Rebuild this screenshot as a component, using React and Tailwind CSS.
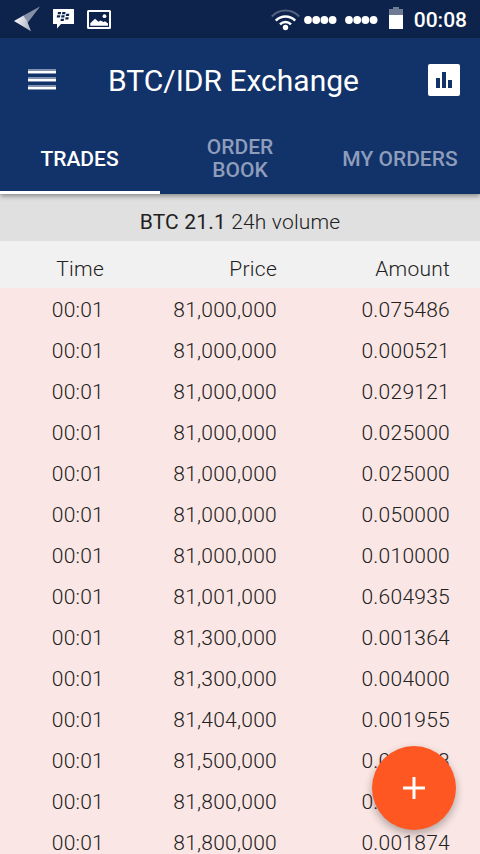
import React from "react";

const TABS = ["TRADES", "ORDER BOOK", "MY ORDERS"];

const TRADES = [
  { time: "00:01", price: "81,000,000", amount: "0.075486" },
  { time: "00:01", price: "81,000,000", amount: "0.000521" },
  { time: "00:01", price: "81,000,000", amount: "0.029121" },
  { time: "00:01", price: "81,000,000", amount: "0.025000" },
  { time: "00:01", price: "81,000,000", amount: "0.025000" },
  { time: "00:01", price: "81,000,000", amount: "0.050000" },
  { time: "00:01", price: "81,000,000", amount: "0.010000" },
  { time: "00:01", price: "81,001,000", amount: "0.604935" },
  { time: "00:01", price: "81,300,000", amount: "0.001364" },
  { time: "00:01", price: "81,300,000", amount: "0.004000" },
  { time: "00:01", price: "81,404,000", amount: "0.001955" },
  { time: "00:01", price: "81,500,000", amount: "0.001123" },
  { time: "00:01", price: "81,800,000", amount: "0.001250" },
  { time: "00:01", price: "81,800,000", amount: "0.001874" },
];

function StatusBar() {
  return (
    <div className="flex h-[38px] items-center bg-[#0e234b] text-white">
      <svg className="ml-[13px]" width="28" height="26" viewBox="0 0 28 26">
        <defs>
          <linearGradient id="wing" x1="0" y1="0" x2="1" y2="0.3">
            <stop offset="0" stopColor="#fff" />
            <stop offset="1" stopColor="#b4bac7" />
          </linearGradient>
        </defs>
        <path d="M10.500 9.500 27 .5 14.500 17z" fill="#8590a6" />
        <path d="M1 15 10.500 9.500 14 15 18 25.300z" fill="url(#wing)" />
      </svg>
      <svg className="ml-[12px]" width="21" height="20" viewBox="0 0 21 20">
        <path d="M.5 0h20a.5.5 0 0 1 .5.5v14a.5.5 0 0 1-.5.5H8l-4 4.500V15H.5a.5.5 0 0 1-.5-.5V.5a.5.5 0 0 1 .5-.5z" fill="#fff" />
        <g fill="#0e234b" transform="skewX(-10)">
          <rect x="5.5" y="3" width="3.200" height="2.200" />
          <rect x="9.9" y="3" width="3.200" height="2.200" />
          <rect x="5.2" y="6.300" width="3.200" height="2.200" />
          <rect x="9.6" y="6.300" width="3.200" height="2.200" />
          <rect x="14" y="4.800" width="3.200" height="2.200" />
          <rect x="9.6" y="9.800" width="3.200" height="2.200" />
          <rect x="14" y="8.200" width="3.200" height="2.200" />
        </g>
      </svg>
      <svg className="ml-[13px]" width="24" height="19" viewBox="0 0 24 19">
        <rect x="1" y="1" width="22" height="17" rx="0.500" fill="none" stroke="#fff" strokeWidth="2" />
        <path d="M3.300 15.700v-2.400l4.700-4.600 3.500 3 2-1.300 3 1.700 1.500-.800 3 2.300v2.100z" fill="#fff" />
        <circle cx="17.500" cy="6.200" r="1.900" fill="#fff" />
      </svg>

      <svg className="-mt-px ml-auto" width="30" height="24" viewBox="0 0 30 24" fill="none">
        <path d="M.8 9.500a18.800 18.800 0 0 1 27.400 0" stroke="#526181" strokeWidth="2" />
        <path d="M4.800 13.600a13.400 13.400 0 0 1 19.400 0" stroke="#fff" strokeWidth="2.500" />
        <path d="M9 17.400a7.700 7.700 0 0 1 11 0" stroke="#fff" strokeWidth="2.500" />
        <circle cx="14.500" cy="20.500" r="2.700" fill="#fff" />
      </svg>
      <svg className="ml-[3px] mt-[2px]" width="75" height="8" viewBox="0 0 75 8" fill="#fff">
        {[4, 12.2, 20.4, 28.6, 45, 53.2, 61.4, 69.6].map((x) => (
          <circle key={x} cx={x} cy="4" r="3.900" />
        ))}
      </svg>
      <svg className="-mt-[2px] ml-[10px]" width="14" height="22" viewBox="0 0 14 22">
        <path d="M4 0h6v2h4v6H0V2h4z" fill="#6e7b93" />
        <path d="M0 8h14v14H0z" fill="#fff" />
      </svg>
      <span className="ml-[11px] mr-[13px] mt-[3px] text-[21px] font-medium leading-none">00:08</span>
    </div>
  );
}

function AppHeader() {
  return (
    <div className="flex h-[85px] items-center text-white">
      <button className="-mt-[2px] ml-[28px] flex h-[21px] w-[28px] flex-col justify-between">
        <span className="h-[5px] w-full border-b border-t-2 border-[#8091b0] bg-white" />
        <span className="h-[5px] w-full border-b border-t-2 border-[#8091b0] bg-white" />
        <span className="h-[5px] w-full border-b border-t-2 border-[#8091b0] bg-white" />
      </button>
      <h1 className="ml-[52px] text-[30px] leading-none">BTC/IDR Exchange</h1>
      <button className="-mt-px ml-auto mr-[20px] flex h-[32px] w-[32px] items-end justify-center gap-[2px] rounded-[2px] bg-white pb-[8px]">
        <span className="h-[10px] w-[4px] bg-[#12326a]" />
        <span className="h-[16px] w-[4px] bg-[#12326a]" />
        <span className="h-[8px] w-[4px] bg-[#12326a]" />
      </button>
    </div>
  );
}

export default function App() {
  const activeTab = "TRADES";

  return (
    <div className="relative h-[854px] w-[480px] overflow-hidden bg-[#fae6e4] font-['Roboto',sans-serif] text-[#212121]">
      <StatusBar />
      <div className="relative h-[156px] bg-[#12326a] shadow-[0_2px_5px_rgba(0,0,0,0.4)]">
        <AppHeader />
        <div className="grid h-[71px] grid-cols-3">
          {TABS.map((tab) => (
            <div
              key={tab}
              className={
                tab === activeTab
                  ? "flex items-center justify-center border-b-[3px] border-white pr-px pt-[4px] text-[21px] font-medium leading-[23px] text-white"
                  : "flex items-center justify-center border-b-[3px] border-transparent pt-[4px] text-center text-[21px] font-medium leading-[23px] text-[#8e9dba]"
              }
            >
              <span className={tab === "ORDER BOOK" ? "w-[80px]" : "whitespace-nowrap"}>{tab}</span>
            </div>
          ))}
        </div>
      </div>

      <div className="flex h-[47px] items-center justify-center bg-[#e0e0e0] pt-[10px] text-[21px] font-light tracking-[0.17px]">
        <span className="whitespace-pre">
          <span className="font-normal">BTC 21.1</span> 24h volume
        </span>
      </div>

      <div className="grid h-[47px] grid-cols-[104px_173px_173px] items-center bg-[#f1f1f1] pt-[11px] text-right text-[21px] font-light tracking-[0.25px]">
        <span>Time</span>
        <span>Price</span>
        <span>Amount</span>
      </div>

      <div className="pt-[2px]">
        {TRADES.map((trade, i) => (
          <div
            key={i}
            className="grid h-[41px] grid-cols-[104px_173px_173px] items-center text-right text-[21px] font-light tracking-[0.25px]"
          >
            <span>{trade.time}</span>
            <span>{trade.price}</span>
            <span>{trade.amount}</span>
          </div>
        ))}
      </div>

      <button className="absolute bottom-[24px] right-[24px] flex h-[84px] w-[84px] items-center justify-center rounded-full bg-[#ff5722] shadow-[0_4px_8px_rgba(0,0,0,0.3)]">
        <svg width="22" height="22" viewBox="0 0 22 22" stroke="#fff" strokeWidth="3">
          <path d="M11 0v22M0 11h22" />
        </svg>
      </button>
    </div>
  );
}
